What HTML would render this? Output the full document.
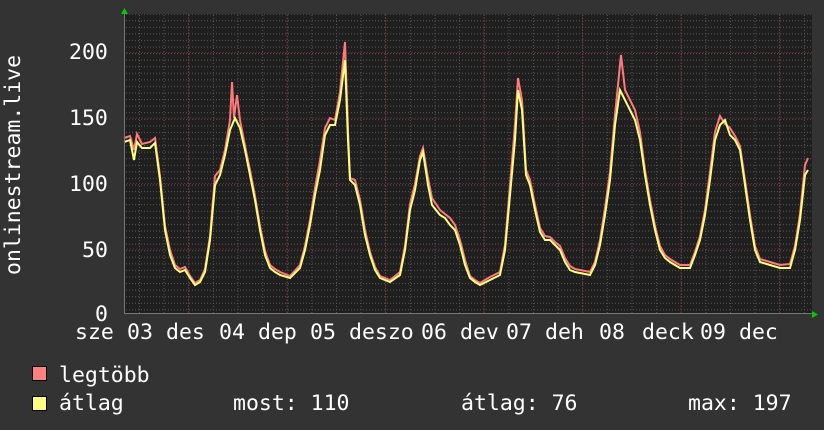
<!DOCTYPE html>
<html><head><meta charset="utf-8"><style>
html,body{margin:0;padding:0;background:#333;}
body{width:824px;height:430px;position:relative;overflow:hidden;font-family:"DejaVu Sans Mono","Liberation Mono",monospace;color:#fff;}
.t{position:absolute;font-size:21.5px;line-height:1;white-space:pre;}
</style></head><body>
<svg width="824" height="430" style="position:absolute;left:0;top:0">
<defs>
<pattern id="vmin" x="139" y="0" width="24.625" height="430" patternUnits="userSpaceOnUse">
<line x1="0.5" y1="0" x2="0.5" y2="430" stroke="#555" stroke-width="1" stroke-dasharray="1,2"/>
</pattern>
<pattern id="hmin" x="0" y="0.5" width="824" height="6.57" patternUnits="userSpaceOnUse">
<line x1="0" y1="0.5" x2="824" y2="0.5" stroke="#555" stroke-width="1" stroke-dasharray="1,2"/>
</pattern>
</defs>
<rect x="124" y="14" width="688" height="299" fill="#1f1f1f"/>
<rect x="124" y="14" width="688" height="299" fill="url(#hmin)"/>
<rect x="124" y="14" width="688" height="299" fill="url(#vmin)"/>
<g stroke="#7a2a2a" stroke-width="1" stroke-dasharray="1,2">
<line x1="188.5" y1="14" x2="188.5" y2="313"/>
<line x1="287" y1="14" x2="287" y2="313"/>
<line x1="385.5" y1="14" x2="385.5" y2="313"/>
<line x1="484" y1="14" x2="484" y2="313"/>
<line x1="582.5" y1="14" x2="582.5" y2="313"/>
<line x1="681" y1="14" x2="681" y2="313"/>
<line x1="779.5" y1="14" x2="779.5" y2="313"/>
<line x1="124" y1="52.5" x2="812" y2="52.5"/>
<line x1="124" y1="118" x2="812" y2="118"/>
<line x1="124" y1="183.5" x2="812" y2="183.5"/>
<line x1="124" y1="249" x2="812" y2="249"/>
</g>
<polyline fill="none" stroke="#ff7a7a" stroke-width="2" points="124,138 130,136 134,150 137,134 142,144 150,142 155,138 160,176 165,226 170,250 175,265 180,269 185,267 190,276 195,283 200,280 205,269 210,236 215,176 220,170 225,150 230,120 232,82 234,118 237,95 240,120 245,146 250,170 255,196 260,226 265,251 270,265 275,269 280,272 290,276 300,265 305,246 310,220 315,188 320,160 325,128 330,118 335,120 340,92 345,42 348,130 350,178 355,180 360,200 365,230 370,252 375,267 380,276 390,280 400,272 405,246 410,204 415,184 420,156 423,148 428,178 432,198 436,204 440,210 445,214 450,218 455,225 460,240 465,260 470,276 475,280 480,283 490,277 500,272 505,245 510,185 515,125 518,78 522,100 526,170 530,180 535,205 540,228 545,236 550,237 555,242 560,246 565,258 570,266 575,269 590,272 595,262 600,240 605,208 610,172 615,115 621,55 625,90 630,100 635,110 640,132 645,170 650,200 655,226 660,246 665,255 670,259 680,265 690,265 695,252 700,236 705,210 710,172 715,132 720,116 725,124 730,128 735,136 740,146 745,180 750,215 755,246 760,259 770,262 780,265 790,264 795,246 800,214 805,165 808,158"/>
<polyline fill="none" stroke="#ffff80" stroke-width="2" points="124,142 130,140 134,160 137,142 142,148 150,148 155,143 160,180 165,230 170,255 175,268 180,272 185,270 190,278 195,285 200,282 205,272 210,240 215,185 220,175 225,155 230,130 235,118 240,128 245,150 250,175 255,200 260,230 265,255 270,268 275,272 280,275 290,278 300,268 305,250 310,225 315,195 320,170 325,135 330,125 335,125 340,100 345,60 348,140 350,180 355,185 360,205 365,235 370,255 375,270 380,278 390,282 400,275 405,250 410,210 415,190 420,160 423,152 428,185 432,205 436,210 440,215 445,218 450,225 455,230 460,245 465,265 470,278 475,282 480,285 490,280 500,275 505,250 510,195 515,140 518,90 522,110 526,175 530,185 535,210 540,232 545,240 550,240 555,245 560,250 565,262 570,270 575,272 590,275 595,265 600,245 605,215 610,180 615,125 620,90 625,100 630,110 635,120 640,140 645,175 650,205 655,230 660,250 665,258 670,262 680,268 690,268 695,255 700,240 705,215 710,180 715,140 720,125 725,120 730,135 735,140 740,150 745,185 750,220 755,250 760,262 770,265 780,268 790,268 795,250 800,220 805,175 808,170"/>
<line x1="124" y1="313.5" x2="812" y2="313.5" stroke="#777" stroke-width="1"/>
<line x1="124.5" y1="12" x2="124.5" y2="313" stroke="#777" stroke-width="1"/>
<polygon points="121,14 128,14 124.5,8" fill="#0c0"/>
<polygon points="812,311 812,318 818,314.5" fill="#0c0"/>
<rect x="32.5" y="366.5" width="14" height="14" fill="#ff8080" stroke="#000"/>
<rect x="32.5" y="396.5" width="14" height="14" fill="#ffff80" stroke="#000"/>
</svg>
<div class="t" style="left:69px;top:42px">200</div>
<div class="t" style="left:69px;top:108px">150</div>
<div class="t" style="left:69px;top:174px">100</div>
<div class="t" style="left:82px;top:240px">50</div>
<div class="t" style="left:95px;top:304px">0</div>
<div class="t" style="left:3px;top:275px;transform:rotate(-90deg);transform-origin:0 0;width:240px">onlinestream.live</div>
<div class="t" style="left:75px;top:322px">sze</div>
<div class="t" style="left:127px;top:322px">03</div>
<div class="t" style="left:166px;top:322px">des</div>
<div class="t" style="left:219px;top:322px">04</div>
<div class="t" style="left:258px;top:322px">dep</div>
<div class="t" style="left:310px;top:322px">05</div>
<div class="t" style="left:349px;top:322px">deszo</div>
<div class="t" style="left:421px;top:322px">06</div>
<div class="t" style="left:460px;top:322px">dev</div>
<div class="t" style="left:506px;top:322px">07</div>
<div class="t" style="left:545px;top:322px">deh</div>
<div class="t" style="left:599px;top:322px">08</div>
<div class="t" style="left:642px;top:322px">deck</div>
<div class="t" style="left:700px;top:322px">09</div>
<div class="t" style="left:739px;top:322px">dec</div>
<div class="t" style="left:59px;top:365px">legtöbb</div>
<div class="t" style="left:59px;top:393px">átlag</div>
<div class="t" style="left:233px;top:393px">most: 110</div>
<div class="t" style="left:461px;top:393px">átlag: 76</div>
<div class="t" style="left:688px;top:393px">max: 197</div>
</body></html>
